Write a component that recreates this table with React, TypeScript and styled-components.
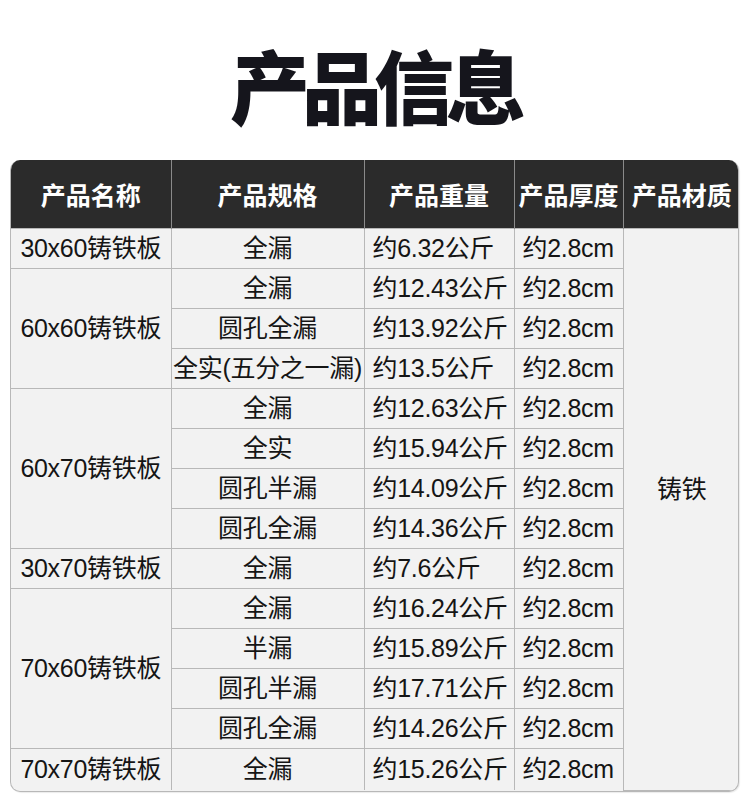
import * as React from "react";
import styled, { createGlobalStyle } from "styled-components";

const GlobalStyle = createGlobalStyle`
  html, body {
    margin: 0;
    padding: 0;
    background: #ffffff;
  }
  body {
    font-family: "Liberation Sans", "Noto Sans CJK SC", sans-serif;
    color: #111;
  }
`;

const Page = styled.div`
  width: 750px;
  height: 810px;
  background: #fff;
`;

const TitleBar = styled.div`
  height: 160px;
  padding-top: 6px;
  box-sizing: border-box;
  display: flex;
  align-items: center;
  justify-content: center;
`;

const Title = styled.h1`
  margin: 0;
  padding-right: 2px;
  font-family: "Noto Sans CJK SC", sans-serif;
  font-size: 80px;
  font-weight: 900;
  letter-spacing: -8px;
  color: #15151c;
  line-height: 1;
`;

const TableFrame = styled.div`
  margin: 0 10px;
  width: 729px;
  border-radius: 10px;
  overflow: hidden;
  border: 1px solid #b8b8b8;
  border-top: none;
  box-sizing: border-box;
  background: #f2f2f2;
  box-shadow: 1px 1px 1px rgba(0, 0, 0, 0.08);
`;

const Table = styled.table`
  width: 100%;
  border-collapse: collapse;
  table-layout: fixed;
`;

const HeadCell = styled.th`
  height: 68px;
  padding: 0;
  background: #2b2b2b;
  color: #fff;
  font-family: "Noto Sans CJK SC", sans-serif;
  font-size: 25px;
  font-weight: 700;
  text-align: center;
  border-left: 1px solid #8a8a8a;
  white-space: nowrap;
  &:first-child {
    border-left: none;
  }
`;

interface ICellProps {
  $align?: "left" | "center";
  $lift?: number;
}

const Cell = styled.td<ICellProps>`
  height: 39px;
  padding: 0 0 ${(p) => p.$lift || 0}px ${(p) => (p.$align === "left" ? 8 : 0)}px;
  font-size: 25px;
  line-height: 1;
  text-align: ${(p) => p.$align || "center"};
  border: 1px solid #b8b8b8;
  white-space: nowrap;
  letter-spacing: -0.3px;
  color: #151515;
  &:first-child {
    border-left: none;
  }
  &:last-child {
    border-right: none;
  }
`;

const BodyRow = styled.tr`
  &:last-child td {
    border-bottom: none;
    height: 41px;
  }
`;

interface IRow {
  name?: string;
  span?: number;
  spec: string;
  weight: string;
}

const rows: IRow[] = [
  { name: "30x60铸铁板", span: 1, spec: "全漏", weight: "约6.32公斤" },
  { name: "60x60铸铁板", span: 3, spec: "全漏", weight: "约12.43公斤" },
  { spec: "圆孔全漏", weight: "约13.92公斤" },
  { spec: "全实(五分之一漏)", weight: "约13.5公斤" },
  { name: "60x70铸铁板", span: 4, spec: "全漏", weight: "约12.63公斤" },
  { spec: "全实", weight: "约15.94公斤" },
  { spec: "圆孔半漏", weight: "约14.09公斤" },
  { spec: "圆孔全漏", weight: "约14.36公斤" },
  { name: "30x70铸铁板", span: 1, spec: "全漏", weight: "约7.6公斤" },
  { name: "70x60铸铁板", span: 4, spec: "全漏", weight: "约16.24公斤" },
  { spec: "半漏", weight: "约15.89公斤" },
  { spec: "圆孔半漏", weight: "约17.71公斤" },
  { spec: "圆孔全漏", weight: "约14.26公斤" },
  { name: "70x70铸铁板", span: 1, spec: "全漏", weight: "约15.26公斤" }
];

const App = () => {
  return (
    <Page>
      <GlobalStyle />
      <TitleBar>
        <Title>产品信息</Title>
      </TitleBar>
      <TableFrame>
        <Table>
          <colgroup>
            <col style={{ width: 160 }} />
            <col style={{ width: 193 }} />
            <col style={{ width: 150 }} />
            <col style={{ width: 109 }} />
            <col style={{ width: 117 }} />
          </colgroup>
          <thead>
            <tr>
              <HeadCell>产品名称</HeadCell>
              <HeadCell>产品规格</HeadCell>
              <HeadCell>产品重量</HeadCell>
              <HeadCell>产品厚度</HeadCell>
              <HeadCell>产品材质</HeadCell>
            </tr>
          </thead>
          <tbody>
            {rows.map((row, i) => (
              <BodyRow key={i}>
                {row.name ? <Cell rowSpan={row.span}>{row.name}</Cell> : null}
                <Cell>{row.spec}</Cell>
                <Cell $align="left">{row.weight}</Cell>
                <Cell $align="left">约2.8cm</Cell>
                {i === 0 ? (
                  <Cell rowSpan={rows.length} $lift={40}>
                    铸铁
                  </Cell>
                ) : null}
              </BodyRow>
            ))}
          </tbody>
        </Table>
      </TableFrame>
    </Page>
  );
};

export default App;
